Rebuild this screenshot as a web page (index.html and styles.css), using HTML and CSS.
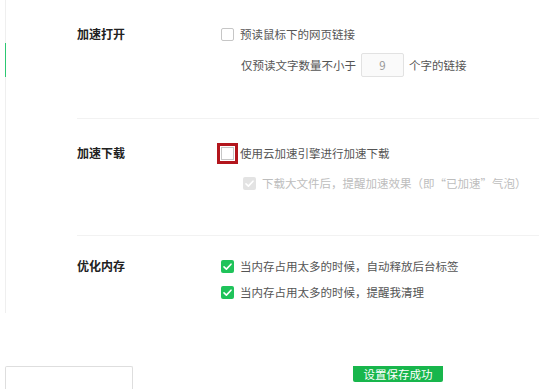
FILE: index.html
```html
<!DOCTYPE html>
<html lang="zh-CN">
  <head>
    <meta charset="UTF-8" />
    <meta name="viewport" content="width=device-width, initial-scale=1.0" />
    <link rel="stylesheet" href="styles.css">
  </head>
  <body>
    <div class="settings">
      <div class="rail">
        <div class="rail-active"></div>
      </div>
      <div class="groups">
        <section class="group group-open">
          <div class="group-title">加速打开</div>
          <div class="group-body">
            <label class="option">
              <span class="check"></span>
              <span>预读鼠标下的网页链接</span>
            </label>
            <div class="option sub-option field-row">
              <span>仅预读文字数量不小于</span>
              <span class="num-input">9</span>
              <span>个字的链接</span>
            </div>
          </div>
        </section>

        <section class="group group-download">
          <div class="group-title">加速下载</div>
          <div class="group-body">
            <label class="option">
              <span class="check marked"></span>
              <span>使用云加速引擎进行加速下载</span>
            </label>
            <label class="option sub-option disabled">
              <span class="check checked">
                <svg viewBox="0 0 13 13" width="13" height="13"><polyline points="3,6.8 5.4,9.1 10,4.2" /></svg>
              </span>
              <span>下载大文件后，提醒加速效果（即“已加速”气泡）</span>
            </label>
          </div>
        </section>

        <section class="group group-memory">
          <div class="group-title">优化内存</div>
          <div class="group-body">
            <label class="option">
              <span class="check checked">
                <svg viewBox="0 0 13 13" width="13" height="13"><polyline points="3,6.8 5.4,9.1 10,4.2" /></svg>
              </span>
              <span>当内存占用太多的时候，自动释放后台标签</span>
            </label>
            <label class="option">
              <span class="check checked">
                <svg viewBox="0 0 13 13" width="13" height="13"><polyline points="3,6.8 5.4,9.1 10,4.2" /></svg>
              </span>
              <span>当内存占用太多的时候，提醒我清理</span>
            </label>
          </div>
        </section>
      </div>
    </div>

    <div class="footer">
      <div class="footer-box"></div>
      <div class="toast">设置保存成功</div>
    </div>
  </body>
</html>
```

FILE: styles.css
```css
body {
  margin: 0;
  font-family: "Noto Sans CJK SC", "Noto Sans", sans-serif;
  font-size: 11.5px;
  color: #555;
  background: #fff;
  overflow: hidden;
}

.settings {
  display: flex;
  height: 313px;
  margin-left: 5px;
}

.rail {
  width: 1px;
  background: #efefef;
  flex-shrink: 0;
}

.rail-active {
  margin-top: 43px;
  height: 34px;
  background: #2cc872;
}

.groups {
  flex: 1;
  padding-left: 71px;
}

.group {
  display: grid;
  grid-template-columns: 144px 1fr;
  box-sizing: border-box;
}

.group-open {
  height: 118px;
  padding-top: 24px;
}

.group-download {
  height: 117px;
  padding-top: 24px;
  border-top: 1px solid #f2f2f2;
}

.group-memory {
  padding-top: 20px;
  border-top: 1px solid #f2f2f2;
}

.group-title {
  font-size: 12px;
  font-weight: 700;
  color: #222;
  line-height: 20px;
}

.group-body {
  display: flex;
  flex-direction: column;
}

.group-open .group-body {
  gap: 9px;
}

.group-download .group-body {
  gap: 10px;
}

.group-memory .group-body {
  gap: 6px;
}

.option {
  display: flex;
  align-items: center;
  gap: 6px;
  height: 20px;
  white-space: nowrap;
}

.sub-option {
  padding-left: 22px;
}

.field-row {
  height: 24px;
  padding-left: 20px;
  gap: 5px;
}

.num-input {
  width: 41px;
  height: 22px;
  line-height: 22px;
  border: 1px solid #e2e2e2;
  border-radius: 2px;
  background: #fafafa;
  color: #999;
  text-align: center;
}

.check {
  width: 11px;
  height: 11px;
  border: 1px solid #c6c6c6;
  border-radius: 2px;
  background: #fff;
  flex-shrink: 0;
  display: flex;
  align-items: center;
  justify-content: center;
}

.check svg {
  fill: none;
  stroke: #fff;
  stroke-width: 1.6;
  stroke-linecap: round;
  stroke-linejoin: round;
}

.check.checked {
  width: 13px;
  height: 13px;
  border: none;
  background: #1fc35a;
}

/* red highlight square drawn round the first download checkbox */
.check.marked {
  border-radius: 0;
  outline: 3px solid #b3161d;
  outline-offset: 1px;
}

.disabled {
  color: #bdbdbd;
}

.disabled .check.checked {
  background: #e3e3e3;
}

.footer {
  display: flex;
  align-items: flex-start;
  margin-top: 53px;
}

.footer-box {
  width: 126px;
  height: 30px;
  margin-left: 5px;
  border: 1px solid #dedede;
  border-bottom: none;
  border-radius: 2px 2px 0 0;
}

.toast {
  margin-left: 220px;
  width: 90px;
  height: 16px;
  line-height: 16px;
  background: #18b64c;
  color: #fff;
  font-size: 11.5px;
  text-align: center;
  border-radius: 0 0 2px 2px;
}
```
